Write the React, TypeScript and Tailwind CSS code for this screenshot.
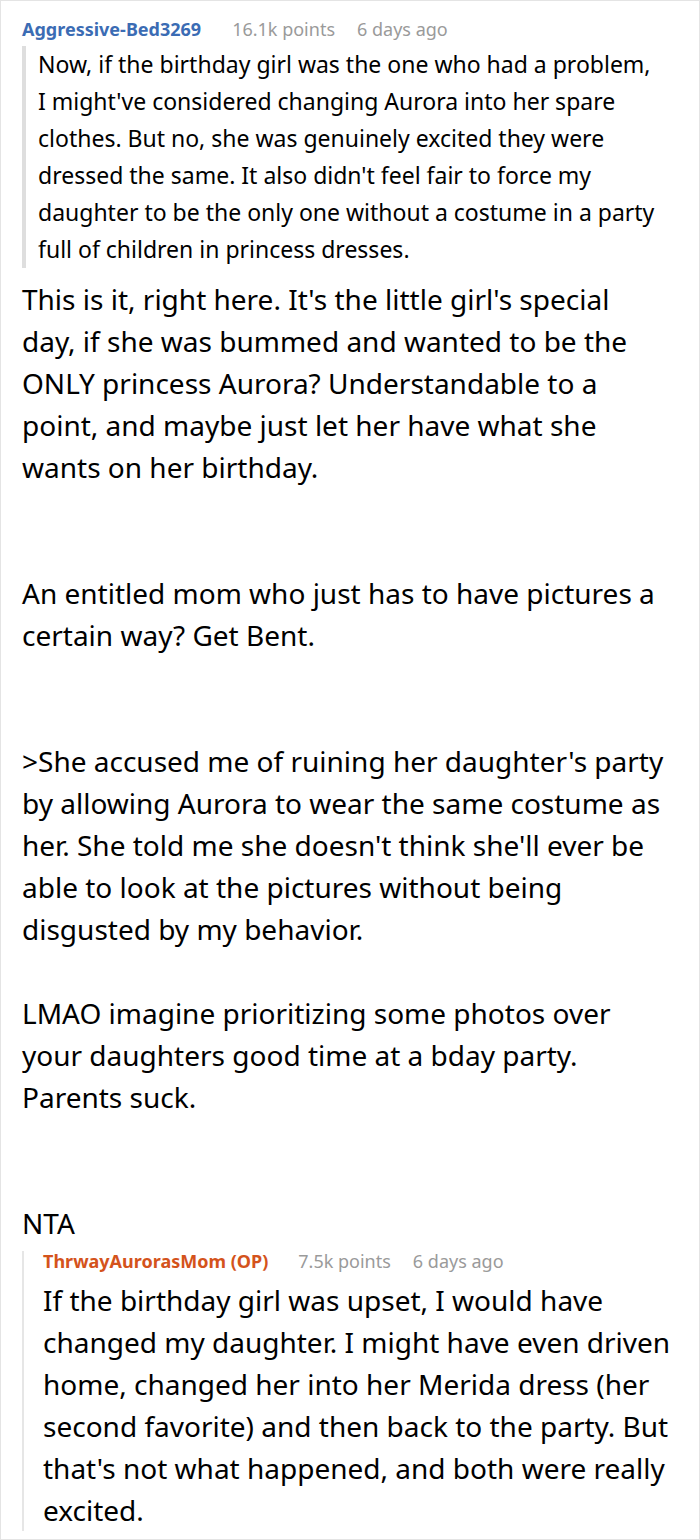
import React from "react";

const font = { fontFamily: '"Noto Sans", "Open Sans", sans-serif' };

export default function App() {
  return (
    <div
      className="w-[700px] h-[1540px] overflow-hidden border border-[#e4e4e4] bg-white text-black"
      style={font}
    >
      <div className="pl-[21px] pr-[26px] pt-[16px]">
        {/* Parent comment header */}
        <div className="flex items-center text-[18px] leading-[24px]">
          <span className="font-bold text-[#3b6cb4]">Aggressive-Bed3269</span>
          <span className="ml-[31px] text-[#9a9a9a]">16.1k points</span>
          <span className="ml-[22px] text-[#9a9a9a]">6 days ago</span>
        </div>

        {/* Quoted text */}
        <div className="mt-[5px] border-l-4 border-[#dedede] pl-[12px] text-[23px] leading-[37px]">
          Now, if the birthday girl was the one who had a problem,
          <br />
          I might've considered changing Aurora into her spare clothes. But no, she was genuinely excited they were dressed the same. It also didn't feel fair to force my daughter to be the only one without a costume in a party full of children in princess dresses.
        </div>

        {/* Comment body */}
        <div className="mt-[10px] pr-[8px] text-[28px] leading-[42px]">
          <p>
            This is it, right here. It's the little girl's special day, if she was bummed and wanted to be the ONLY princess Aurora? Understandable to a point, and maybe just let her have what she wants on her birthday.
          </p>
          <p className="mt-[84px]">
            An entitled mom who just has to have pictures a certain way? Get Bent.
          </p>
          <p className="mt-[84px]">
            &gt;She accused me of ruining her daughter's party by allowing Aurora to wear the same costume as her. She told me she doesn't think she'll ever be able to look at the pictures without being disgusted by my behavior.
          </p>
          <p className="mt-[42px]">
            LMAO imagine prioritizing some photos over your daughters good time at a bday party. Parents suck.
          </p>
          <p className="mt-[84px]">NTA</p>
        </div>

        {/* Reply */}
        <div className="mt-[17px] border-l-2 border-[#e6e6e6] pl-[19px]">
          <div className="-mt-[10px] flex items-center text-[18px] leading-[20px]">
            <span className="font-bold text-[#d4531c]">ThrwayAurorasMom (OP)</span>
            <span className="ml-[30px] text-[#9a9a9a]">7.5k points</span>
            <span className="ml-[22px] text-[#9a9a9a]">6 days ago</span>
          </div>
          <p className="-mb-[10px] mt-[8px] text-[28px] leading-[42px]">
            If the birthday girl was upset, I would have changed my daughter. I might have even driven home, changed her into her Merida dress (her second favorite) and then back to the party. But that's not what happened, and both were really excited.
          </p>
        </div>
      </div>
    </div>
  );
}
